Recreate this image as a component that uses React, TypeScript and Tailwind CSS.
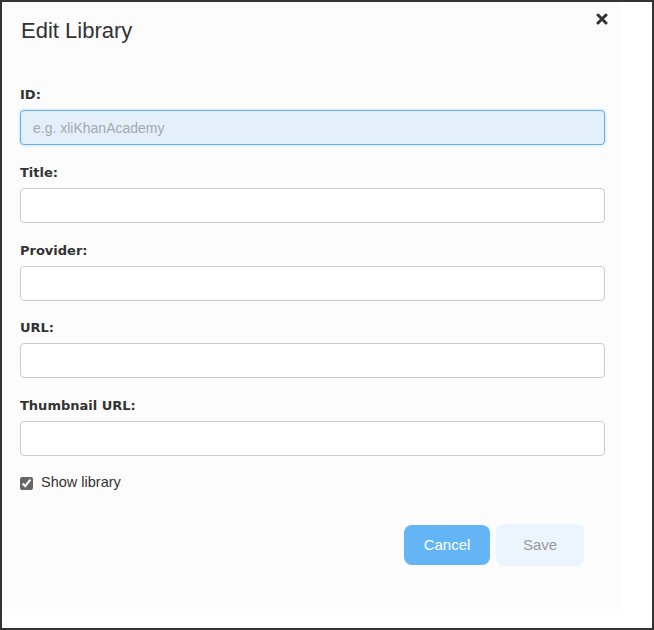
import React from "react";

const labelCls =
  "block text-[13px] leading-[18px] font-bold text-[#333] mb-[6px] font-['DejaVu_Sans',sans-serif]";
const inputCls =
  "block w-[585px] h-[35px] rounded-[4px] border border-[#ccc] bg-white px-3 text-[14px] text-[#555] font-['Liberation_Sans',Arial,sans-serif] outline-none";

function Field({ label, first }: { label: string; first?: boolean }) {
  return (
    <div className={first ? "" : "mt-[18.75px]"}>
      <label className={labelCls}>{label}</label>
      <input className={inputCls} />
    </div>
  );
}

export default function App() {
  return (
    <div className="w-[654px] h-[630px] border-2 border-[#333] bg-white font-['Liberation_Sans',Arial,sans-serif]">
      <div className="relative w-[620px] h-[607px] bg-[#fcfcfc] pt-[16px] pl-[18px]">
        <button className="absolute left-[594px] top-[11px] w-[12px] h-[12px] flex items-center justify-center">
          <svg width="12" height="12" viewBox="0 0 12 12">
            <path
              d="M2 2 L10 10 M10 2 L2 10"
              stroke="#333"
              strokeWidth="3"
              strokeLinecap="round"
            />
          </svg>
        </button>
        <h4 className="text-[22px] leading-[25px] text-[#333] pl-[1px]">Edit Library</h4>

        <div className="mt-[43px]">
          <div>
            <label className={labelCls}>ID:</label>
            <input
              className="block w-[585px] h-[35px] rounded-[4px] border border-[#66afe9] bg-[#e3f0fc] px-3 text-[14px] text-[#555] placeholder:text-[#a3a8ad] font-['Liberation_Sans',Arial,sans-serif] outline-none shadow-[0_0_3px_rgba(102,175,233,0.5)]"
              placeholder="e.g. xliKhanAcademy"
            />
          </div>
          <Field label="Title:" />
          <Field label="Provider:" />
          <Field label="URL:" />
          <Field label="Thumbnail URL:" />
        </div>

        <div className="mt-[19px] flex items-center h-[16px]">
          <input
            type="checkbox"
            defaultChecked
            className="w-[13px] h-[13px] m-0 accent-[#666]"
          />
          <span className="ml-[8px] text-[14.5px] text-[#333]">Show library</span>
        </div>

        <div className="mt-[33px] flex items-center justify-end gap-[6px] w-[564px]">
          <button className="w-[86px] h-[40px] rounded-[8px] bg-[#64b5f6] text-white text-[15px]">
            Cancel
          </button>
          <button className="w-[88px] h-[42px] rounded-[8px] bg-[#ecf5fd] text-[#9a9a9a] text-[15px]">
            Save
          </button>
        </div>
      </div>
    </div>
  );
}
